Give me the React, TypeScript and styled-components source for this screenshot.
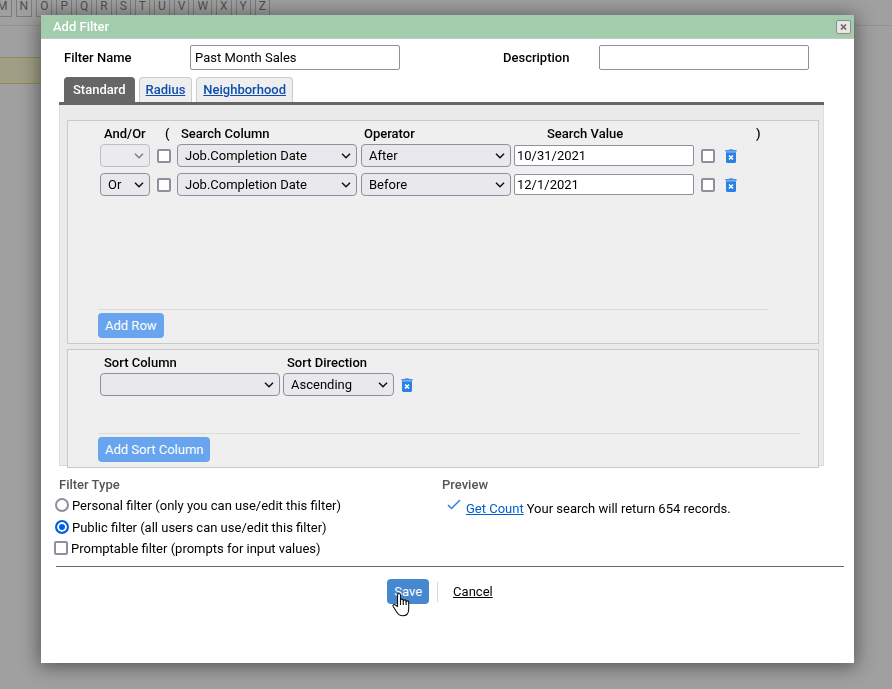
import React from "react";
import styled, { createGlobalStyle, css } from "styled-components";

const GlobalStyle = createGlobalStyle`
  *, *::before, *::after { box-sizing: border-box; }
  body {
    margin: 0;
    background: #a0a0a0;
    color: #000;
    font: 13px/15px Roboto, "Liberation Sans", sans-serif;
  }
  button, input, select { margin: 0; font: inherit; color: inherit; }
`;

const Page = styled.div`
  min-height: 100vh;
  overflow: hidden;
`;

const LetterBar = styled.nav`
  display: flex;
  justify-content: flex-end;
  gap: 4px;
  width: 270px;
`;

const Letter = styled.a`
  flex: none;
  padding: 0 3px 4px;
  border: 1px solid #7c7c7c;
  border-top: 0;
  color: #505050;
  font-size: 12px;
  line-height: 12px;
  text-decoration: none;
`;

const PageRule = styled.hr`
  margin: 8px 0 31px;
  border: 0;
  border-top: 1px solid #929292;
`;

const Highlight = styled.div`
  width: 50%;
  height: 27px;
  background: #a09f85;
  border: solid #8f8d55;
  border-width: 1px 0;
`;

const Overlay = styled.div`
  position: fixed;
  inset: 0;
  display: flex;
  padding: 15px 38px 26px 41px;
`;

const Dialog = styled.section`
  flex: 1;
  min-width: 0;
  background: #fff;
  box-shadow: 0 2px 18px 2px rgba(0, 0, 0, 0.45);
`;

const TitleBar = styled.header`
  display: flex;
  align-items: center;
  justify-content: space-between;
  height: 24px;
  padding: 0 3px 0 12px;
  background: #a2ccac;
  border-bottom: 1px solid #c6c6c6;
`;

const Title = styled.h1`
  margin: 0;
  color: #fff;
  font-size: 13px;
  font-weight: 500;
`;

const CloseButton = styled.button`
  display: grid;
  place-items: center;
  width: 15px;
  height: 14px;
  padding: 0;
  background: #e6e6e6;
  border: 1px solid #8d8d8d;
  border-radius: 2px;
`;

const NameRow = styled.div`
  display: grid;
  grid-template-columns: 126px minmax(0, 210px) 103px 96px minmax(0, 210px);
  align-items: center;
  padding: 6px 20px 7px 23px;
`;

const FieldLabel = styled.label<{ $second?: boolean }>`
  grid-column: ${(p) => (p.$second ? 4 : "auto")};
  font-weight: 500;
`;

const TextInput = styled.input<{ $tall?: boolean }>`
  display: block;
  width: ${(p) => (p.$tall ? "100%" : "180px")};
  height: ${(p) => (p.$tall ? 25 : 21)}px;
  padding: 0 ${(p) => (p.$tall ? 4 : 2)}px;
  background: #fff;
  border: 1px solid #8f8f9d;
  border-radius: 2px;
`;

const TabList = styled.div`
  display: flex;
  gap: 4px;
  margin: 0 30px 0 18px;
  padding-left: 5px;
  border-bottom: 3px solid #666;
`;

const Tab = styled.button<{ $active?: boolean }>`
  height: 25px;
  padding: 0 6px 2px;
  border: 1px solid #ccc;
  border-bottom: 0;
  border-radius: 4px 4px 0 0;
  background: #eee;
  color: #0d4dad;
  font-weight: 500;
  text-decoration: underline;
  white-space: nowrap;
  ${(p) =>
    p.$active &&
    css`
      padding: 0 8px 2px;
      background: #666;
      border-color: #666;
      color: #fff;
      text-decoration: none;
    `}
`;

const Panel = styled.div`
  margin: 0 30px 0 18px;
  padding: 15px 4px 0 7px;
  background: #eaeaea;
  border: solid #ddd;
  border-width: 0 1px 1px;
`;

const Group = styled.section`
  padding: 0 50px 5px 30px;
  background: #efefef;
  border: 1px solid #c9c9c9;
  & + & {
    margin: 5px 0 -3px;
    padding-right: 18px;
  }
`;

const Rows = styled.div<{ $minHeight: number }>`
  min-height: ${(p) => p.$minHeight}px;
  margin-bottom: 3px;
  padding-left: 2px;
  border-bottom: 1px solid #dbdbdb;
`;

const Table = styled.table`
  width: 100%;
  table-layout: fixed;
  border-collapse: collapse;
`;

const Head = styled.th<{ $width?: number; $indent: number }>`
  width: ${(p) => (p.$width ? `${p.$width}px` : "auto")};
  height: 20px;
  padding: 5px 0 0 ${(p) => p.$indent}px;
  font-weight: 500;
  line-height: 15px;
  text-align: left;
  vertical-align: top;
  white-space: nowrap;
`;

const Cell = styled.td`
  height: 29px;
  padding: 0;
  vertical-align: middle;
`;

const SelectWrap = styled.div<{ $width: number; $disabled?: boolean }>`
  position: relative;
  width: ${(p) => p.$width}px;
  opacity: ${(p) => (p.$disabled ? 0.5 : 1)};
  svg {
    position: absolute;
    top: 9px;
    right: 6px;
    pointer-events: none;
  }
`;

const NativeSelect = styled.select`
  display: block;
  appearance: none;
  width: 100%;
  height: 23px;
  padding: 0 20px 0 7px;
  background: #e9e9ed;
  border: 1px solid #8f8f9d;
  border-radius: 4px;
  &:disabled { opacity: 1; }
`;

const Check = styled.input`
  display: block;
  flex: none;
  appearance: none;
  width: 14px;
  height: 14px;
  background: #fff;
  border: 2px solid #8f8f9d;
  border-radius: 2px;
  &:checked { background: #0060df; border-color: #0060df; }
`;

const Radio = styled(Check)`
  border-radius: 50%;
  &:checked {
    background: #0060df;
    border-color: #0060df;
    box-shadow: inset 0 0 0 2px #fff;
  }
`;

const IconButton = styled.button`
  display: block;
  padding: 0;
  background: none;
  border: 0;
  svg { display: block; }
`;

const Button = styled.button<{ $primary?: boolean }>`
  position: relative;
  display: block;
  height: 25px;
  padding: 0 7px;
  background: ${(p) => (p.$primary ? "#4688cf" : "#68a5ee")};
  border: 0;
  border-radius: 4px;
  color: #fff;
`;

const Options = styled.div`
  display: grid;
  grid-template-columns: 383px minmax(0, 1fr);
  margin: 11px 30px 8px 18px;
`;

const OptionGroup = styled.div`
  display: flex;
  flex-direction: column;
`;

const OptionTitle = styled.h2`
  margin: 0 0 2px;
  color: #555;
  font-size: 13px;
  font-weight: 500;
  line-height: 15px;
`;

const Option = styled.label<{ $box?: boolean }>`
  display: flex;
  align-items: center;
  gap: 3px;
  height: ${(p) => (p.$box ? 20 : 22)}px;
  margin-left: ${(p) => (p.$box ? -5 : -4)}px;
`;

const CountLine = styled.div`
  display: flex;
  align-items: flex-start;
  gap: 3px;
  padding: 7px 0 0 5px;
  svg { flex: none; margin: -2px 2px 0 0; }
`;

const Link = styled.a<{ $plain?: boolean }>`
  color: ${(p) => (p.$plain ? "#000" : "#0060cf")};
  text-decoration: underline;
`;

const Footer = styled.footer`
  display: flex;
  align-items: center;
  justify-content: center;
  margin: 0 10px 0 15px;
  padding: 12px 20px 0 0;
  border-top: 1px solid #666;
`;

const Divider = styled.span`
  width: 1px;
  height: 20px;
  margin: 0 15px 0 8px;
  background: #d5d5d5;
`;

const Pointer = styled.svg`
  position: absolute;
  left: 4px;
  top: 13px;
  z-index: 1;
  pointer-events: none;
`;

const Chevron = () => (
  <svg width="10" height="6" viewBox="0 0 10 6" fill="none" aria-hidden="true">
    <path d="M1 .8 5 4.8 9 .8" stroke="#111" strokeWidth="1.5" />
  </svg>
);

function Select({ label, value, width, disabled }: {
  label: string; value: string; width: number; disabled?: boolean;
}) {
  return (
    <SelectWrap $width={width} $disabled={disabled}>
      <NativeSelect aria-label={label} defaultValue={value} disabled={disabled}>
        <option>{value}</option>
      </NativeSelect>
      <Chevron />
    </SelectWrap>
  );
}

const DeleteButton = ({ label }: { label: string }) => (
  <IconButton type="button" aria-label={label}>
    <svg width="12" height="14" viewBox="0 0 12 14">
      <path d="M4 0h4v1h3.5v2H.5V1H4z" fill="#72abee" />
      <path d="M.5 1.2h11V2H.5z" fill="#3987e3" />
      <path d="M1 3h10v9.5c0 .8-.7 1.5-1.5 1.5h-7C1.7 14 1 13.3 1 12.5z" fill="#2b80e3" />
      <path d="M1 3h10v1H1z" fill="#5c9dea" />
      <path d="m4 6.500 4 4m0-4-4 4" stroke="#fff" strokeWidth="1.500" />
    </svg>
  </IconButton>
);

const conditions = [
  { joiner: "", column: "Job.Completion Date", operator: "After", value: "10/31/2021" },
  { joiner: "Or", column: "Job.Completion Date", operator: "Before", value: "12/1/2021" },
];

export default function App() {
  return (
    <Page>
      <GlobalStyle />
      <LetterBar aria-label="Browse by letter">
        {"MNOPQRSTUVWXYZ".split("").map((l) => (
          <Letter key={l} href="#">{l}</Letter>
        ))}
      </LetterBar>
      <PageRule />
      <Highlight />
      <Overlay>
        <Dialog role="dialog" aria-labelledby="dialog-title">
          <TitleBar>
            <Title id="dialog-title">Add Filter</Title>
            <CloseButton type="button" aria-label="Close">
              <svg width="7" height="6" viewBox="0 0 7 6">
                <path d="M1 .5 6 5.500M6 .5 1 5.500" stroke="#6c6c6c" strokeWidth="1.700" />
              </svg>
            </CloseButton>
          </TitleBar>

          <NameRow>
            <FieldLabel htmlFor="name">Filter Name</FieldLabel>
            <TextInput id="name" $tall defaultValue="Past Month Sales" />
            <FieldLabel htmlFor="description" $second>Description</FieldLabel>
            <TextInput id="description" $tall />
          </NameRow>

          <TabList role="tablist">
            <Tab type="button" role="tab" aria-selected="true" $active>Standard</Tab>
            <Tab type="button" role="tab" aria-selected="false">Radius</Tab>
            <Tab type="button" role="tab" aria-selected="false">Neighborhood</Tab>
          </TabList>

          <Panel role="tabpanel">
            <Group>
              <Rows $minHeight={189}>
                <Table>
                  <thead>
                    <tr>
                      <Head $width={57} $indent={4}>And/Or</Head>
                      <Head $width={20} $indent={8}>(</Head>
                      <Head $width={184} $indent={4}>Search Column</Head>
                      <Head $width={153} $indent={3}>Operator</Head>
                      <Head $width={187} $indent={33}>Search Value</Head>
                      <Head $width={24} $indent={0} />
                      <Head $indent={31}>)</Head>
                    </tr>
                  </thead>
                  <tbody>
                    {conditions.map((c, i) => (
                      <tr key={i}>
                        <Cell><Select label="And/Or" value={c.joiner} width={50} disabled={i === 0} /></Cell>
                        <Cell><Check type="checkbox" aria-label="Open parenthesis" /></Cell>
                        <Cell><Select label="Search Column" value={c.column} width={180} /></Cell>
                        <Cell><Select label="Operator" value={c.operator} width={150} /></Cell>
                        <Cell><TextInput aria-label="Search Value" defaultValue={c.value} /></Cell>
                        <Cell><Check type="checkbox" aria-label="Close parenthesis" /></Cell>
                        <Cell><DeleteButton label="Delete row" /></Cell>
                      </tr>
                    ))}
                  </tbody>
                </Table>
              </Rows>
              <Button type="button">Add Row</Button>
            </Group>

            <Group>
              <Rows $minHeight={84}>
                <Table>
                  <thead>
                    <tr>
                      <Head $width={183} $indent={4}>Sort Column</Head>
                      <Head $width={118} $indent={4}>Sort Direction</Head>
                      <Head $indent={0} />
                    </tr>
                  </thead>
                  <tbody>
                    <tr>
                      <Cell><Select label="Sort Column" value="" width={180} /></Cell>
                      <Cell><Select label="Sort Direction" value="Ascending" width={111} /></Cell>
                      <Cell><DeleteButton label="Delete sort column" /></Cell>
                    </tr>
                  </tbody>
                </Table>
              </Rows>
              <Button type="button">Add Sort Column</Button>
            </Group>
          </Panel>

          <Options>
            <OptionGroup>
              <OptionTitle>Filter Type</OptionTitle>
              <Option>
                <Radio type="radio" name="type" />
                Personal filter (only you can use/edit this filter)
              </Option>
              <Option>
                <Radio type="radio" name="type" defaultChecked />
                Public filter (all users can use/edit this filter)
              </Option>
              <Option $box>
                <Check type="checkbox" />
                Promptable filter (prompts for input values)
              </Option>
            </OptionGroup>
            <OptionGroup>
              <OptionTitle>Preview</OptionTitle>
              <CountLine>
                <svg width="14" height="11" viewBox="0 0 14 11" fill="none" aria-hidden="true">
                  <path d="m1 6 3.500 3.500L13 1" stroke="#2b80e3" strokeWidth="1.500" />
                </svg>
                <Link href="#">Get Count</Link>
                <span>Your search will return 654 records.</span>
              </CountLine>
            </OptionGroup>
          </Options>

          <Footer>
            <Button type="button" $primary>
              Save
              <Pointer width="19" height="25" viewBox="0 0 19 25" aria-hidden="true">
                <path
                  d="M6.500 14.500V3a1.500 1.500 0 0 1 3 0v5.500a1.400 1.400 0 0 1 2.800 0v.7a1.400 1.400 0 0 1 2.800.2v.6a1.300 1.300 0 0 1 2.600.3V17c0 4-2.200 6.800-6 6.800-3.300 0-4.700-1.500-6-3.800l-3.500-5.500c-.9-1.600.9-2.700 2.200-1.500z"
                  fill="#fff" stroke="#111" strokeWidth="1.100" strokeLinejoin="round"
                />
                <path d="M9.500 8.500V13m2.800-4.500V13m2.800-3.500V13" stroke="#111" strokeWidth="1.100" fill="none" />
              </Pointer>
            </Button>
            <Divider />
            <Link href="#" $plain>Cancel</Link>
          </Footer>
        </Dialog>
      </Overlay>
    </Page>
  );
}
